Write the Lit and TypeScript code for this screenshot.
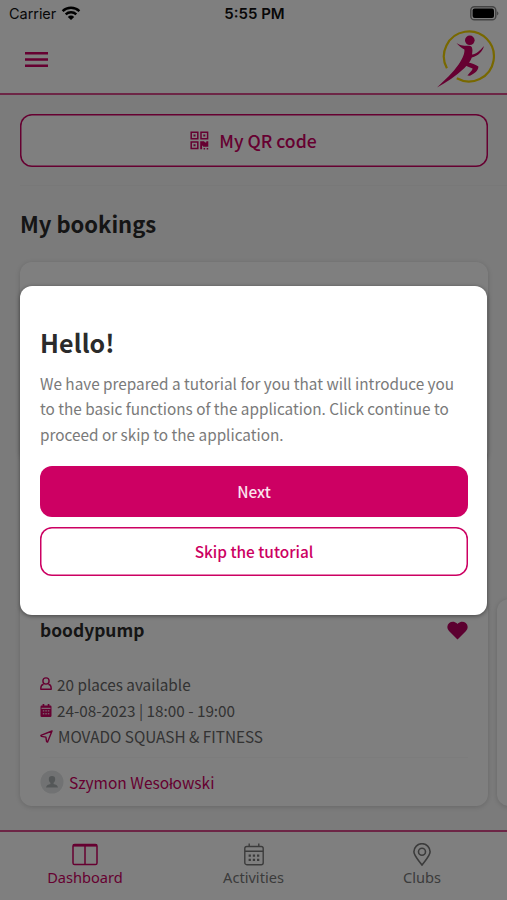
import { LitElement, html, css, svg } from "lit";
import { customElement } from "lit/decorators.js";

const wifi = svg`<svg class="wifi" width="20" height="15" viewBox="0 0 20 15" fill="none" stroke="#000" stroke-width="2.4"><path d="M1.6 5.2A12 12 0 0 1 18.4 5.2"/><path d="M4.7 8.4A7.6 7.6 0 0 1 15.3 8.4"/><path d="M10 14 6.8 10.9A4.6 4.6 0 0 1 13.2 10.9Z" fill="#000" stroke="none"/></svg>`;
const battery = svg`<svg width="30" height="15" viewBox="0 0 30 15"><rect x=".8" y=".8" width="25" height="13" rx="3.6" fill="none" stroke="#888" stroke-width="1.5"/><rect x="2.6" y="2.6" width="21.4" height="9.4" rx="2" fill="#000"/><path d="M27.2 5.2Q29.6 7.4 27.2 9.6Z" fill="#777"/></svg>`;
const burger = svg`<svg width="23" height="16" viewBox="0 0 23 16" fill="#cc0062"><path d="M0 0h23v2.400H0zM0 6.300h23v2.400H0zM0 12.500h23v2.400H0z"/></svg>`;
const logo = svg`<svg class="logo" width="60" height="60" viewBox="0 0 60 60"><path d="M10.900 39.300A25 25 0 1 1 20.800 49.300" fill="none" stroke="#f0d000" stroke-width="2.2"/><g fill="#cc0062"><circle cx="33.8" cy="11.300" r="4.8"/><path d="M20.500 14C25 17 28.500 16.700 33.300 16.800C36.500 17.200 37 20.500 36 25.600C40.300 24.800 43.500 22.200 48 17C46.300 23 42.300 26.800 35.800 28.600C34.600 32.300 31.500 36 28.500 39C20 47 10 53.500 1 58.500C9 51.200 17 43.600 22.600 35.600C26.800 29.300 28.800 24.500 28.400 20.600C25.600 19 22.800 17 20.500 14Z"/><path d="M31.500 33.200C35.500 34.200 40 35.600 42.400 37.600C42.400 41.400 39 44.600 34 46.800L31.400 46.500L33.500 44C35.200 42.600 36.200 41.200 36.600 39.600C34 38.400 31.600 37.400 28.800 36.200Z"/></g></svg>`;
const qr = svg`<svg width="19" height="19" viewBox="0 0 19 19" fill="none" stroke="#cc0062" stroke-width="1.5"><path d="M1.2 1.2h6.6v6.6H1.2zM11 1.2h6.6v6.6H11zM1.2 11h6.6v6.6H1.2z"/><g fill="#cc0062" stroke="none"><path d="M3.5 3.5h2v2h-2zM13.3 3.5h2v2h-2zM3.5 13.3h2v2h-2zM10.2 10.2h3.8l1.200 1.300h1.100v-1.300h2v5.600h-5.200v-1h-1v3.400h-1.900zM13.6 16.9h1.500v1.500h-1.500zM16.7 16.9h1.500v1.500h-1.500z"/></g></svg>`;
const heartPath = "M10.5 18.400 2 10A5.500 5.500 0 0 1 2.200 1.900C4.500.1 7.900.3 9.800 2.300L10.500 3.100 11.200 2.300C13.100.3 16.500.1 18.800 1.900A5.500 5.500 0 0 1 19 10Z";
const heart = svg`<svg width="21" height="19" viewBox="0 0 21 19"><path d="${heartPath}" fill="#b80060"/></svg>`;
const heartOutline = svg`<svg width="21" height="19" viewBox="0 0 21 19"><path d="${heartPath}" fill="none" stroke="#999" stroke-width="1.300"/></svg>`;
const person = svg`<svg width="12" height="14" viewBox="0 0 12 14" fill="none" stroke="#cc0062" stroke-width="1.4" stroke-linejoin="round"><circle cx="6" cy="4" r="3.1"/><path d="M3.600 7.300C1.600 7.800.8 9.300.8 11.200V12.300H11.200V11.200C11.200 9.300 10.400 7.800 8.400 7.300"/></svg>`;
const calendar = svg`<svg width="12" height="13" viewBox="0 0 12 13"><path d="M2.600 0h1.700v1.500h3.400V0h1.700v1.500h.9q1.200 0 1.200 1.200v9q0 1.300-1.200 1.300H1.700Q.5 13 .5 11.700v-9q0-1.200 1.200-1.200h.9z" fill="#cc0062"/><path d="M1.500 4.300h9M2.800 6.900h1.500m1 0h1.500m1 0h1.500M2.800 9.800h1.500m1 0h1.500m1 0h1.500" stroke="#fff" stroke-width="1"/></svg>`;
const arrow = svg`<svg width="13" height="13" viewBox="0 0 13 13" fill="none" stroke="#cc0062" stroke-width="1.400" stroke-linejoin="round"><path d="M12 1 .9 5.400 1.400 6.400 5.900 7.100 6.600 11.600 7.600 12.100Z"/></svg>`;
const avatar = svg`<svg width="24" height="24" viewBox="0 0 24 24"><circle cx="12" cy="12" r="11.500" fill="#e2e5e6"/><g fill="#a9afb1"><path d="M12 6a3.200 3.200 0 0 1 3.200 3.300C15.200 11.200 14.400 12 13.600 12.800V14C15.800 14.500 17.500 15 18 17.400H6C6.500 15 8.200 14.500 10.400 14V12.800C9.600 12 8.800 11.200 8.800 9.300A3.200 3.200 0 0 1 12 6Z"/></g></svg>`;
const dash = svg`<svg width="26" height="22" viewBox="0 0 26 22" fill="none" stroke="#cc0062" stroke-width="1.500"><rect x="1" y="1" width="24" height="20" rx="1.600"/><path d="M1 1.900h24" stroke-width="2.400"/><path d="M13 2v19"/></svg>`;
const activities = svg`<svg width="20" height="22" viewBox="0 0 20 22" fill="none" stroke="#777" stroke-width="1.400"><rect x=".8" y="3" width="18.400" height="18.200" rx="2"/><path d="M1 7.800h18M5.200 0v3M14.800 0v3"/><path d="M4.600 12.200h2.300m1.900 0h2.300m1.900 0h2.300M4.600 16.400h2.300m1.900 0h2.300m1.900 0h2.300" stroke-width="2.300"/></svg>`;
const pin = svg`<svg width="18" height="23" viewBox="0 0 18 23" fill="none" stroke="#777" stroke-width="1.600"><path d="M9 22C6.500 18.200.9 13 .9 8.800A8.100 8.100 0 0 1 17.100 8.800C17.100 13 11.500 18.200 9 22Z"/><circle cx="9" cy="8.800" r="3.500"/></svg>`;

@customElement("app-root")
export class AppRoot extends LitElement {
  static styles = css`
    :host { display: flex; flex-direction: column; position: relative; height: 900px; overflow: hidden; background: #f6f6f6; color: #2b2b2b; font-family: "Noto Sans CJK SC", sans-serif; }
    * { box-sizing: border-box; }
    svg { display: block; flex: none; }
    h1, h2, h3, p { margin: 0; }
    button { font-family: inherit; cursor: pointer; padding: 0; }
    .top { flex: none; height: 95px; background: #fff; border-bottom: 2px solid #db4c8c; }
    .status { display: grid; grid-template-columns: 1fr auto 1fr; align-items: center; height: 27px; padding: 0 7px 0 9px; font: 15px/27px Inter, sans-serif; color: #111; }
    .carrier { display: flex; gap: 5px; align-items: center; font-size: 14.500px; letter-spacing: -.05px; }
    .time { font-weight: 600; }
    .power { justify-self: end; }
    .bar { display: flex; justify-content: space-between; padding: 2px 11px 0 25px; }
    .burger { padding-top: 23px; }
    .body { flex: 1; min-height: 0; padding: 19px 0 0 20px; overflow: hidden; }
    .outline { display: flex; align-items: center; justify-content: center; border: 0; box-shadow: inset 0 0 0 1.500px #cc0062; color: #cc0062; background: #fff; }
    .qr { width: 468px; height: 53px; border-radius: 12px; gap: 10px; font-size: 17.600px; font-weight: 500; padding: 0 1px 1px 0; }
    .qr svg { margin-top: 1px; }
    .rule { height: 1px; background: #f1f1f1; }
    .qr + .rule { margin-top: 18px; }
    .heading { margin-top: 19px; font-size: 22px; line-height: 36px; font-weight: 700; }
    .card { background: #fff; border-radius: 12px; box-shadow: 0 1px 5px rgba(0,0,0,.16); width: 468px; flex: none; }
    .booking { height: 200px; margin-top: 21px; padding: 22px 20px 0; }
    .booking .title { justify-content: flex-end; }
    .row { display: flex; gap: 9px; margin-top: 137px; }
    .class { height: 207px; padding: 19px 20px 0; }
    .title { display: flex; justify-content: space-between; align-items: center; height: 24px; font-size: 17.400px; font-weight: 700; }
    .title span { margin-top: -1px; }
    .facts { margin-top: 29px; color: #666; font-size: 15.300px; line-height: 26px; }
    .fact { display: flex; align-items: center; gap: 5px; height: 26px; }
    .class .rule { margin-top: 8px; background: #f8f8f8; }
    .coach { display: flex; align-items: center; gap: 5px; height: 47px; color: #cc0062; font-size: 15.500px; }
    .coach svg { margin-top: 1px; }
    .tabs { flex: none; display: grid; grid-template-columns: 170px 167px 170px; height: 70px; border-top: 2px solid #db4c8c; background: #fff; font: 14.600px/20px "Noto Sans", sans-serif; color: #777; }
    .tab { display: flex; flex-direction: column; align-items: center; padding-top: 11px; gap: 1px; }
    .tab svg { height: 23px; }
    .active { color: #cc0062; }
    .overlay { position: absolute; inset: 0; display: flex; align-items: flex-start; justify-content: center; padding-top: 285.500px; background: rgba(0,0,0,.5); }
    .dialog { width: 467px; height: 329.500px; padding: 36px 20px 0; border-radius: 12px; background: #fff; box-shadow: 0 1px 4px rgba(0,0,0,.45); }
    .hello { font-size: 25px; line-height: 40px; font-weight: 700; letter-spacing: .1px; }
    .copy { margin-top: 9px; color: #7a7a7a; font-size: 15.320px; line-height: 25.800px; white-space: nowrap; }
    .action { width: 428px; border-radius: 12px; font-size: 15.400px; font-weight: 500; }
    .next { display: block; height: 51px; margin-top: 18px; border: 0; background: #cd0063; color: #fbe3ee; }
    .skip { height: 49px; margin-top: 10px; }
  `;

  render() {
    return html`
      <header class="top">
        <div class="status">
          <span class="carrier">Carrier ${wifi}</span>
          <span class="time">5:55 PM</span>
          <span class="power">${battery}</span>
        </div>
        <div class="bar"><div class="burger">${burger}</div>${logo}</div>
      </header>
      <main class="body">
        <button class="outline qr">${qr}<span>My QR code</span></button>
        <div class="rule"></div>
        <h2 class="heading"><span>My bookings</span></h2>
        <div class="card booking"><div class="title">${heartOutline}</div></div>
        <div class="row">
          <article class="card class">
            <h3 class="title"><span>boodypump</span>${heart}</h3>
            <div class="facts">
              <div class="fact">${person}<span>20 places available</span></div>
              <div class="fact">${calendar}<span>24-08-2023 | 18:00 - 19:00</span></div>
              <div class="fact">${arrow}<span>MOVADO SQUASH &amp; FITNESS</span></div>
            </div>
            <div class="rule"></div>
            <div class="coach">${avatar}<span>Szymon Wesołowski</span></div>
          </article>
          <article class="card class"></article>
        </div>
      </main>
      <nav class="tabs">
        <div class="tab active">${dash}<span>Dashboard</span></div>
        <div class="tab">${activities}<span>Activities</span></div>
        <div class="tab">${pin}<span>Clubs</span></div>
      </nav>
      <div class="overlay">
        <section class="dialog">
          <h1 class="hello"><span>Hello!</span></h1>
          <p class="copy">We have prepared a tutorial for you that will introduce you<br>to the basic functions of the application. Click continue to<br>proceed or skip to the application.</p>
          <button class="action next">Next</button>
          <button class="action outline skip">Skip the tutorial</button>
        </section>
      </div>`;
  }
}
